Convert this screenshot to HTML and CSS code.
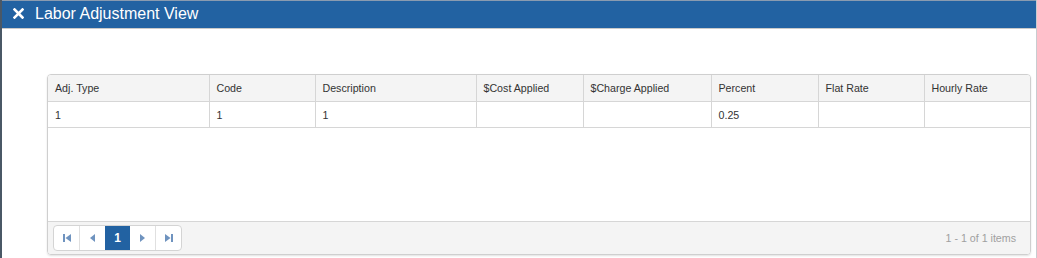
FILE: index.html
```html
<!DOCTYPE html>
<html lang="en">

<head>
    <meta charset="UTF-8">
    <title>Labor Adjustment View</title>
    <link rel="stylesheet" href="styles.css">
</head>

<body>
    <div class="window">
        <div class="window-titlebar">
            <span class="close-icon">
                <svg width="11" height="11" viewBox="0 0 11 11">
                    <path d="M1.5 1.5 L9.5 9.5 M9.5 1.5 L1.5 9.5" stroke="#fff" stroke-width="2.6" stroke-linecap="square"/>
                </svg>
            </span>
            <span class="window-title">Labor Adjustment View</span>
        </div>
        <div class="window-content">
            <div class="grid">
                <table class="grid-table">
                    <colgroup>
                        <col style="width: 161px">
                        <col style="width: 106px">
                        <col style="width: 161px">
                        <col style="width: 107px">
                        <col style="width: 128px">
                        <col style="width: 107px">
                        <col style="width: 106px">
                        <col>
                    </colgroup>
                    <thead>
                        <tr>
                            <th>Adj. Type</th>
                            <th>Code</th>
                            <th>Description</th>
                            <th>$Cost Applied</th>
                            <th>$Charge Applied</th>
                            <th>Percent</th>
                            <th>Flat Rate</th>
                            <th>Hourly Rate</th>
                        </tr>
                    </thead>
                    <tbody>
                        <tr>
                            <td>1</td>
                            <td>1</td>
                            <td>1</td>
                            <td></td>
                            <td></td>
                            <td>0.25</td>
                            <td></td>
                            <td></td>
                        </tr>
                    </tbody>
                </table>
                <div class="grid-empty"></div>
                <div class="pager">
                    <div class="pager-buttons">
                        <a class="pager-btn">
                            <svg width="8" height="8" viewBox="0 0 8 8"><rect x="0" y="0" width="2" height="8" fill="#6f93bf"/><path d="M8 0 L8 8 L2.5 4 Z" fill="#6f93bf"/></svg>
                        </a>
                        <a class="pager-btn">
                            <svg width="5" height="8" viewBox="0 0 5 8"><path d="M5 0 L5 8 L0 4 Z" fill="#6f93bf"/></svg>
                        </a>
                        <a class="pager-btn current">1</a>
                        <a class="pager-btn">
                            <svg width="5" height="8" viewBox="0 0 5 8"><path d="M0 0 L0 8 L5 4 Z" fill="#6f93bf"/></svg>
                        </a>
                        <a class="pager-btn">
                            <svg width="8" height="8" viewBox="0 0 8 8"><path d="M0 0 L0 8 L5.5 4 Z" fill="#6f93bf"/><rect x="6" y="0" width="2" height="8" fill="#6f93bf"/></svg>
                        </a>
                    </div>
                    <span class="pager-info">1 - 1 of 1 items</span>
                </div>
            </div>
        </div>
    </div>
</body>

</html>
```

FILE: styles.css
```css
body {
    font-family: Arial, "Liberation Sans", sans-serif;
    margin: 0;
    background-color: #4a5866;
    height: 258px;
    overflow: hidden;
}

.window {
    margin-left: 2px;
    width: 1034px;
    height: 258px;
    background-color: #fff;
    border-right: 1px solid #c8ccd0;
    display: flex;
    flex-direction: column;
}

.window-titlebar {
    background-color: #2262a2;
    border-top: 1px solid #8a9bb0;
    border-bottom: 1px solid #c9c9c9;
    height: 27px;
    display: flex;
    align-items: center;
    color: #fff;
    flex-shrink: 0;
}

.close-icon {
    display: flex;
    margin-left: 11px;
    margin-right: 11px;
    margin-top: -2px;
}

.window-title {
    font-size: 16px;
    margin-top: -2px;
}

.window-content {
    flex: 1;
    padding: 45px 5px 0 45px;
}

.grid {
    border: 1px solid #cfcfcf;
    border-radius: 4px;
    box-shadow: 0 1px 2px rgba(0, 0, 0, 0.12);
    overflow: hidden;
    height: 179px;
    display: flex;
    flex-direction: column;
}

.grid-table {
    width: 100%;
    border-collapse: collapse;
    table-layout: fixed;
    font-size: 8pt;
    color: #333;
}

.grid-table th {
    background-color: #f4f4f4;
    font-weight: normal;
    text-align: left;
    height: 26px;
    padding: 0 7px;
    border-left: 1px solid #d6d6d6;
    border-bottom: 1px solid #d6d6d6;
}

.grid-table td {
    height: 25px;
    padding: 0 7px;
    border-left: 1px solid #d6d6d6;
    border-bottom: 1px solid #d6d6d6;
}

.grid-table th:first-child,
.grid-table td:first-child {
    border-left: none;
}

.grid-empty {
    flex: 1;
}

.pager {
    background-color: #f4f4f4;
    border-top: 1px solid #d6d6d6;
    height: 32px;
    display: flex;
    align-items: center;
    justify-content: space-between;
    padding: 0 14px 0 5px;
    flex-shrink: 0;
}

.pager-buttons {
    display: flex;
    border: 1px solid #d4d4d4;
    border-radius: 4px;
    background-color: #fff;
    overflow: hidden;
    height: 24px;
}

.pager-btn {
    width: 25px;
    display: flex;
    align-items: center;
    justify-content: center;
    border-left: 1px solid #e0e0e0;
    font-size: 12px;
    font-weight: bold;
    cursor: pointer;
}

.pager-btn:first-child {
    border-left: none;
}

.pager-btn.current {
    background-color: #2262a2;
    color: #fff;
    border-left: none;
}

.pager-btn.current + .pager-btn {
    border-left: none;
}

.pager-info {
    font-size: 8pt;
    color: #a0a0a0;
}
```
